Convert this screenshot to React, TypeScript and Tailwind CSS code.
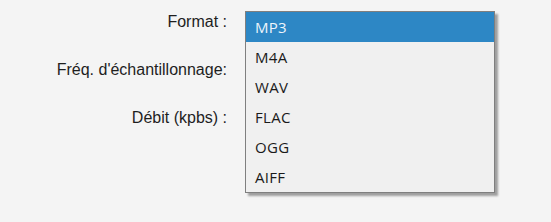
import React from "react";

const labels = ["Format :", "Fréq. d'échantillonnage:", "Débit (kpbs) :"];
const items = ["MP3", "M4A", "WAV", "FLAC", "OGG", "AIFF"];

export default function App() {
  return (
    <div className="relative w-[551px] h-[222px] bg-[#f4f4f4] overflow-hidden">
      <div className="flex flex-col gap-[24px] pt-[10px] w-[227px] [font-family:'Liberation_Sans',Arial,sans-serif] text-[16px] text-[#1e1e1e]">
        {labels.map((l) => (
          <div key={l} className="h-[24px] leading-[24px] text-right">
            {l}
          </div>
        ))}
      </div>
      <div className="absolute left-[245px] top-[11px] w-[250px] border border-[#7f7f7f] bg-[#f0f0f0] shadow-[3px_3px_2px_rgba(0,0,0,0.35)] [font-family:'Open_Sans','Noto_Sans',sans-serif] text-[15px] tracking-[0.3px]">
        {items.map((it, i) => (
          <div
            key={it}
            className={
              "h-[30px] flex items-center pl-[9px] " +
              (i === 0 ? "bg-[#2d87c5] text-[#eef5fb]" : "text-[#1a1a1a]")
            }
          >
            {it}
          </div>
        ))}
      </div>
    </div>
  );
}
